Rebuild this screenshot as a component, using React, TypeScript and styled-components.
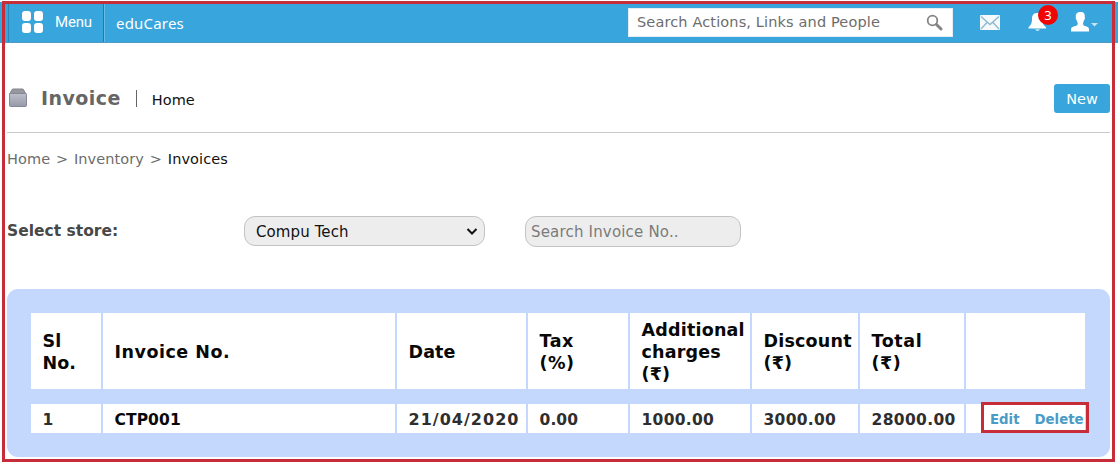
import React from "react";
import styled, { createGlobalStyle } from "styled-components";

const Global = createGlobalStyle`
  * { box-sizing: border-box; }
  body { margin: 0; background: #fff; overflow: hidden; font-family: "DejaVu Sans", Verdana, sans-serif; }
  input, select, button { font-family: inherit; margin: 0; outline: none; }
`;

const Page = styled.div`
  position: relative;
  width: 1118px;
  height: 465px;
  padding-top: 2px;
`;

const Outline = styled.div`
  position: absolute;
  left: 2px;
  top: 1px;
  width: 1113px;
  height: 461px;
  border: 3px solid #c62d38;
  pointer-events: none;
`;

const TopBar = styled.header`
  display: flex;
  align-items: center;
  height: 41px;
  padding-left: 8px;
  background: #38a5dc;
  border-bottom: 1px solid #4f9bc6;
  color: #fff;
`;

const MenuButton = styled.div`
  display: flex;
  align-items: center;
  width: 96px;
  height: 40px;
  padding-left: 13px;
  border-left: 1px solid #2c86b5;
  border-right: 1px solid #2379a8;
`;

const MenuLabel = styled.span`
  margin: -1px 0 0 12px;
  font: 15px/20px Roboto, sans-serif;
  letter-spacing: -0.2px;
`;

const Brand = styled.div`
  flex: 1;
  height: 40px;
  padding-left: 11px;
  border-left: 1px solid #67bce6;
  font: 15px/42px "Noto Sans", sans-serif;
  letter-spacing: 0.2px;
`;

const SearchBox = styled.label`
  display: flex;
  align-items: center;
  width: 325px;
  height: 29px;
  margin-right: 27px;
  padding: 0 9px 0 8px;
  background: #fff;
  border: 1px solid #e3edf3;
`;

const SearchField = styled.input`
  flex: 1;
  min-width: 0;
  padding: 0;
  border: 0;
  font-size: 14.5px;
  letter-spacing: 0.14px;
  &::placeholder { color: #6d6d6d; opacity: 1; }
`;

const IconSlot = styled.div<{ $width: number }>`
  position: relative;
  display: flex;
  align-items: center;
  width: ${(p) => p.$width}px;
  height: 40px;
`;

const Badge = styled.span`
  position: absolute;
  left: 10px;
  top: 3px;
  width: 20px;
  height: 20px;
  border-radius: 50%;
  background: #f00505;
  font: 13px/20px "Noto Sans", sans-serif;
  text-align: center;
`;

const Content = styled.main`
  padding: 0 8px 0 7px;
`;

const TitleRow = styled.div`
  display: flex;
  align-items: center;
  height: 90px;
  padding-top: 21px;
  border-bottom: 1px solid #c9c9c9;
`;

const Title = styled.h1`
  margin: -1px 0 0 13px;
  color: #666;
  font-size: 19px;
  line-height: 24px;
  letter-spacing: 0.45px;
`;

const Divider = styled.span`
  width: 1px;
  height: 17px;
  margin: 0 15px 0 15px;
  background: #666;
`;

const HomeLink = styled.a`
  flex: 1;
  padding-top: 4px;
  color: #111;
  font-size: 14.5px;
`;

const NewButton = styled.button`
  width: 56px;
  height: 29px;
  padding: 2px 0 0;
  border: 0;
  border-radius: 3px;
  background: #38a5dc;
  color: #fff;
  font-size: 14.5px;
`;

const Crumbs = styled.nav`
  display: flex;
  gap: 5.8px;
  height: 50px;
  color: #6c6c6c;
  font-size: 14.5px;
  letter-spacing: 0.08px;
  line-height: 52px;
`;

const Current = styled.span`
  color: #111;
`;

const Filters = styled.div`
  display: flex;
  height: 106px;
  padding-top: 33px;
`;

const StoreLabel = styled.label`
  width: 237px;
  color: #484848;
  font-size: 15.5px;
  font-weight: bold;
  line-height: 31px;
`;

const SelectWrap = styled.div`
  position: relative;
  width: 241px;
  margin-right: 40px;
`;

const StoreSelect = styled.select`
  width: 241px;
  height: 30px;
  padding: 1px 11px 0 11px;
  appearance: none;
  border: 1px solid #c3c3c3;
  border-radius: 11px;
  background: #ededed;
  color: #111;
  font-size: 15px;
  letter-spacing: 0.1px;
`;

const SelectArrow = styled.svg`
  position: absolute;
  right: 7px;
  top: 11px;
`;

const InvoiceSearch = styled.input`
  width: 216px;
  height: 31px;
  padding: 1px 6px 0 5px;
  border: 1px solid #c3c3c3;
  border-radius: 11px;
  background: #ededed;
  font-size: 15px;
  letter-spacing: 0.18px;
  &::placeholder { color: #7b7b7b; opacity: 1; }
`;

const Panel = styled.section`
  display: flex;
  flex-direction: column;
  gap: 15px;
  height: 168px;
  padding: 24px 25px 24px 24px;
  border-radius: 11px;
  background: #c4d8fe;
`;

const Row = styled.div<{ $height: number }>`
  display: grid;
  grid-template-columns: 70px 292px 129px 100px 120px 106px 104px 119px;
  column-gap: 2px;
  height: ${(p) => p.$height}px;
`;

const HeadCell = styled.div<{ $spacing: number }>`
  display: flex;
  align-items: center;
  padding: 1px 0 0 11.5px;
  background: #fff;
  color: #080808;
  font-size: 17.5px;
  font-weight: bold;
  letter-spacing: ${(p) => p.$spacing}px;
  line-height: 22px;
  white-space: pre;
`;

const Cell = styled(HeadCell)<{ $dark?: boolean }>`
  padding-top: 2px;
  color: ${(p) => (p.$dark ? "#080808" : "#2e2e2e")};
  font-size: ${(p) => (p.$spacing > 0.5 ? 16 : 15.5)}px;
`;

const Actions = styled.div`
  position: relative;
  display: flex;
  align-items: center;
  gap: 15px;
  padding: 2px 0 0 24px;
  background: #fff;
`;

const ActionLink = styled.a`
  color: #4a9bc6;
  font-size: 13.3px;
  font-weight: bold;
`;

const ActionOutline = styled.div`
  position: absolute;
  left: 15px;
  top: -2px;
  width: 108px;
  height: 31px;
  border: 3px solid #c62d38;
`;

const columns = [
  { heading: "Sl\nNo.", headSpacing: 0.1, value: "1", spacing: 0 },
  { heading: "Invoice No.", headSpacing: 0.5, value: "CTP001", spacing: 0.1 },
  { heading: "Date", headSpacing: 0.1, value: "21/04/2020", spacing: 1.02 },
  { heading: "Tax\n(%)", headSpacing: 0.5, value: "0.00", spacing: 0.1 },
  { heading: "Additional\ncharges\n(₹)", headSpacing: 0.2, value: "1000.00", spacing: 0.3 },
  { heading: "Discount\n(₹)", headSpacing: 0.2, value: "3000.00", spacing: 0.3 },
  { heading: "Total\n(₹)", headSpacing: 0.6, value: "28000.00", spacing: 0.35 },
  { heading: "", headSpacing: 0, value: "", spacing: 0 },
];

export default function App() {
  return (
    <>
      <Global />
      <Page>
        <TopBar>
          <MenuButton>
            <svg width="21" height="22" viewBox="0 0 21 22" fill="#fff">
              <rect width="9" height="10" rx="3" />
              <rect x="12" width="9" height="10" rx="3" />
              <rect y="12" width="9" height="10" rx="3" />
              <rect x="12" y="12" width="9" height="10" rx="3" />
            </svg>
            <MenuLabel>Menu</MenuLabel>
          </MenuButton>
          <Brand>eduCares</Brand>
          <SearchBox>
            <SearchField placeholder="Search Actions, Links and People" />
            <svg width="17" height="17" viewBox="0 0 17 17" fill="none" stroke="#858585">
              <circle cx="6.5" cy="6.5" r="4.8" strokeWidth="1.8" />
              <path d="M10.5 10.5L15 15" strokeWidth="3" strokeLinecap="round" />
            </svg>
          </SearchBox>
          <IconSlot $width={48}>
            <svg width="20" height="15" viewBox="0 0 20 15">
              <rect width="20" height="15" rx="1" fill="#f4f9fc" />
              <path d="M1 1.500L10 9.500L19 1.500M1 14L7 7.500M19 14L13 7.500" fill="none" stroke="#8fb9cf" strokeWidth="1.4" />
            </svg>
          </IconSlot>
          <IconSlot $width={43}>
            <svg width="19" height="20" viewBox="0 0 19 20" fill="#fff">
              <path d="M9 1C5 1 4 4 4 7C4 12 2.500 13 .5 15.500V16.500H18V15.500C15.500 13 14.500 12 14.500 7C14.500 4 13 1 9 1Z" />
              <path d="M7 17.500H12Q9.500 20 7 17.500Z" />
            </svg>
            <Badge>3</Badge>
          </IconSlot>
          <IconSlot $width={47}>
            <svg width="27" height="20" viewBox="0 0 27 20">
              <path d="M9.500 0C5.800 0 4.400 2.200 4.900 5C4.300 6 5.100 7.600 5.700 8.300C6.100 10 6.800 10.500 6.800 12C6.800 14.500 0 14 0 17V19.500H18V17C18 14 12 14.500 12 12C12 10.500 12.700 10 13 8.300C13.700 7.600 14.400 6 13.700 5C14.100 2 13 0 9.500 0Z" fill="#fff" />
              <path d="M20 11H27L23.500 14.500Z" fill="#c5e5f6" />
            </svg>
          </IconSlot>
        </TopBar>
        <Content>
          <TitleRow>
            <svg width="21" height="20" viewBox="0 0 21 20">
              <defs>
                <linearGradient id="box" x2="0" y2="1">
                  <stop stopColor="#bdbfca" />
                  <stop offset="1" stopColor="#969aa8" />
                </linearGradient>
              </defs>
              <path d="M5.500 1H16L19 6H2.500Z" fill="#96979f" stroke="#85868e" />
              <rect x="2.500" y="5.500" width="17" height="13" rx="1" fill="url(#box)" stroke="#858896" />
            </svg>
            <Title>Invoice</Title>
            <Divider />
            <HomeLink>Home</HomeLink>
            <NewButton>New</NewButton>
          </TitleRow>
          <Crumbs>
            <span>Home</span>
            <span>&gt;</span>
            <span>Inventory</span>
            <span>&gt;</span>
            <Current>Invoices</Current>
          </Crumbs>
          <Filters>
            <StoreLabel htmlFor="store">Select store:</StoreLabel>
            <SelectWrap>
              <StoreSelect id="store">
                <option>Compu Tech</option>
              </StoreSelect>
              <SelectArrow width="12" height="9" viewBox="0 0 12 9">
                <path d="M1.500 2L6 6.500L10.500 2" fill="none" stroke="#111" strokeWidth="2" />
              </SelectArrow>
            </SelectWrap>
            <InvoiceSearch placeholder="Search Invoice No.." />
          </Filters>
          <Panel>
            <Row $height={76}>
              {columns.map((c, i) => (
                <HeadCell key={i} $spacing={c.headSpacing}>{c.heading}</HeadCell>
              ))}
            </Row>
            <Row $height={29}>
              {columns.slice(0, 7).map((c, i) => (
                <Cell key={i} $spacing={c.spacing} $dark={i === 1}>{c.value}</Cell>
              ))}
              <Actions>
                <ActionLink>Edit</ActionLink>
                <ActionLink>Delete</ActionLink>
                <ActionOutline />
              </Actions>
            </Row>
          </Panel>
        </Content>
        <Outline />
      </Page>
    </>
  );
}
